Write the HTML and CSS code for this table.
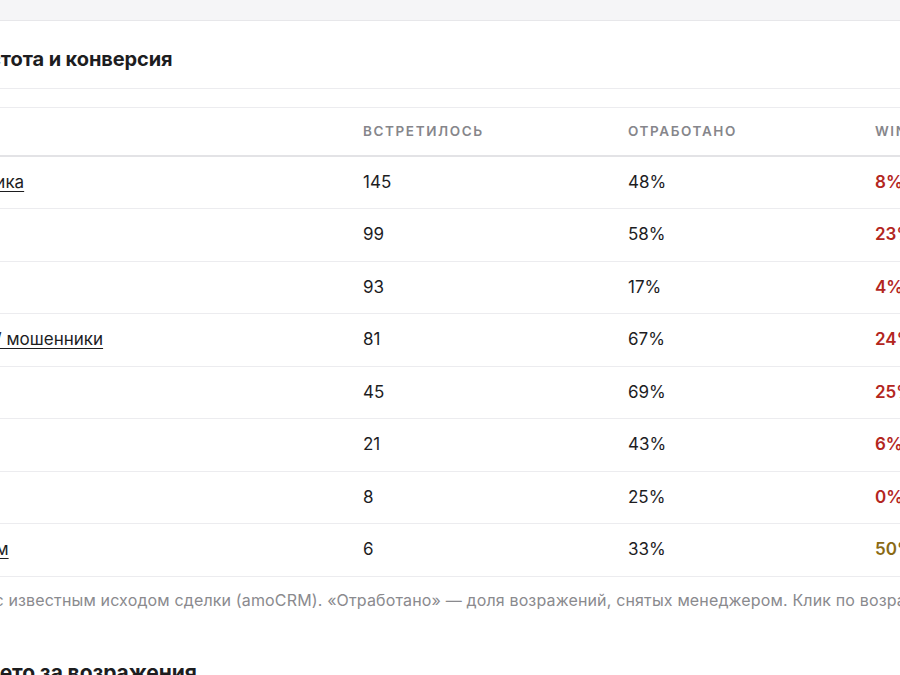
FILE: index.html
```html
<!DOCTYPE html>
<html lang="ru">
<head>
<meta charset="utf-8">
<title>Возражения</title>
<link rel="stylesheet" href="styles.css">
</head>
<body>
<div class="topbar"></div>
<main class="page">
  <div class="section-head">
    <h2 class="title">Возражения: частота и конверсия</h2>
  </div>
  <div class="table">
    <div class="row head">
      <div class="cell">Возражение</div>
      <div class="cell">Встретилось</div>
      <div class="cell">Отработано</div>
      <div class="cell">Win rate</div>
    </div>
    <div class="row">
      <div class="cell"><a class="link" href="#">Неудобная логистика</a></div>
      <div class="cell">145</div>
      <div class="cell">48%</div>
      <div class="cell win bad">8%</div>
    </div>
    <div class="row">
      <div class="cell"><a class="link" href="#">Дорого</a></div>
      <div class="cell">99</div>
      <div class="cell">58%</div>
      <div class="cell win bad">23%</div>
    </div>
    <div class="row">
      <div class="cell"><a class="link" href="#">Подумаю</a></div>
      <div class="cell">93</div>
      <div class="cell">17%</div>
      <div class="cell win bad">4%</div>
    </div>
    <div class="row">
      <div class="cell"><a class="link" href="#">Не доверяют вам / мошенники</a></div>
      <div class="cell">81</div>
      <div class="cell">67%</div>
      <div class="cell win bad">24%</div>
    </div>
    <div class="row">
      <div class="cell"><a class="link" href="#">Нет времени</a></div>
      <div class="cell">45</div>
      <div class="cell">69%</div>
      <div class="cell win bad">25%</div>
    </div>
    <div class="row">
      <div class="cell"><a class="link" href="#">Не актуально</a></div>
      <div class="cell">21</div>
      <div class="cell">43%</div>
      <div class="cell win bad">6%</div>
    </div>
    <div class="row">
      <div class="cell"><a class="link" href="#">Нет денег</a></div>
      <div class="cell">8</div>
      <div class="cell">25%</div>
      <div class="cell win bad">0%</div>
    </div>
    <div class="row">
      <div class="cell"><a class="link" href="#">Перезвоните потом</a></div>
      <div class="cell">6</div>
      <div class="cell">33%</div>
      <div class="cell win mid">50%</div>
    </div>
  </div>
  <p class="note">Win rate по звонкам с известным исходом сделки (amoCRM). «Отработано» — доля возражений, снятых менеджером. Клик по возражению открывает список звонков.</p>
  <h2 class="title next">Что было не задето за возражения</h2>
</main>
</body>
</html>
```
FILE: styles.css
```css
* { box-sizing: border-box; }
html, body { margin: 0; padding: 0; }
body {
  background: #ffffff;
  font-family: Inter, "Noto Sans", "DejaVu Sans", sans-serif;
  color: #1d1d1f;
  overflow: hidden;
  width: 900px;
  height: 675px;
}
.topbar {
  height: 21px;
  background: #f5f5f7;
  border-bottom: 1px solid #e7e7ea;
}
.page {
  margin-left: -170px;
  width: 1320px;
}
.section-head {
  padding: 26px 0 16px;
  border-bottom: 1px solid #ececef;
}
.title {
  margin: 0;
  font-size: 20px;
  line-height: 25px;
  font-weight: 700;
  letter-spacing: -0.1px;
}
.table {
  margin-top: 18px;
  border-top: 1px solid #ececef;
}
.row {
  display: grid;
  grid-template-columns: 519px 265px 247px 289px;
  border-bottom: 1px solid #ececef;
  font-size: 17px;
  line-height: 21.5px;
}
.row .cell { padding: 15px 0 15px 14px; white-space: nowrap; }
.row.head {
  border-bottom: 2px solid #e3e3e6;
  font-size: 13.5px;
  font-weight: 600;
  letter-spacing: 1.6px;
  text-transform: uppercase;
  color: #86868b;
}
.row.head .cell { padding: 13px 0 12px 14px; }
.link { color: #1d1d1f; text-decoration: underline; text-underline-offset: 3px; text-decoration-thickness: 1px; }
.win { font-weight: 600; }
.win.bad { color: #b3261e; }
.win.mid { color: #8a6a14; }
.note {
  margin: 12px 0 0;
  font-size: 16px;
  line-height: 22px;
  color: #8a8a8e;
  letter-spacing: 0.15px;
  white-space: nowrap;
}
.title.next {
  margin-top: 49px;
  font-size: 21px;
}
```
